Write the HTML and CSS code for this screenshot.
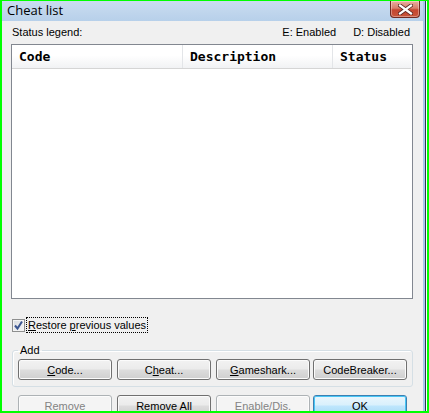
FILE: index.html
```html
<!DOCTYPE html>
<html>
<head>
    <title>Cheat list</title>
    <link rel="stylesheet" href="styles.css">
</head>
<body>
    <div class="screen">
        <div class="window">
            <div class="titlebar">
                <span class="title">Cheat list</span>
                <div class="close-btn">
                    <svg width="15" height="11" viewBox="0 0 15 11">
                        <path d="M2 1.5 L13 9.5 M13 1.5 L2 9.5" stroke="#5a2620" stroke-width="4" stroke-linecap="square"/>
                        <path d="M2 1.5 L13 9.5 M13 1.5 L2 9.5" stroke="#ffffff" stroke-width="2.2" stroke-linecap="square"/>
                    </svg>
                </div>
            </div>

            <div class="client">
                <div class="legend-row">
                    <span class="legend-label">Status legend:</span>
                    <span class="legend-item">E: Enabled</span>
                    <span class="legend-item last">D: Disabled</span>
                </div>

                <div class="listbox">
                    <div class="list-header">
                        <div class="col col-code">Code</div>
                        <div class="col col-desc">Description</div>
                        <div class="col col-status">Status</div>
                    </div>
                </div>

                <div class="check-row">
                    <span class="checkbox">
                        <svg width="11" height="11" viewBox="0 0 11 11">
                            <path d="M2 5.5 L4.5 8.5 L9 1.5" fill="none" stroke="#3c5691" stroke-width="2"/>
                        </svg>
                    </span>
                    <span class="check-label"><u>R</u>estore <u>p</u>revious values</span>
                </div>

                <fieldset class="add-group">
                    <legend>Add</legend>
                    <div class="btn-row">
                        <button class="btn"><u>C</u>ode...</button>
                        <button class="btn">C<u>h</u>eat...</button>
                        <button class="btn"><u>G</u>ameshark...</button>
                        <button class="btn narrow-gap">CodeBreaker...</button>
                    </div>
                </fieldset>

                <div class="btn-row bottom-row">
                    <button class="btn disabled"><u>R</u>emove</button>
                    <button class="btn">Remove <u>A</u>ll</button>
                    <button class="btn disabled"><u>E</u>nable/Dis.</button>
                    <button class="btn default narrow-gap"><u>O</u>K</button>
                </div>
            </div>
        </div>
    </div>
</body>
</html>
```

FILE: styles.css
```css
body {
    margin: 0;
    width: 429px;
    height: 413px;
    overflow: hidden;
    background-color: #ffffff;
    font-family: "Liberation Sans", Arial, sans-serif;
    font-size: 11px;
    color: #000000;
}

.screen {
    box-sizing: border-box;
    width: 429px;
    height: 413px;
    border: 2px solid #00ff00;
    border-top-width: 1px;
    overflow: hidden;
}

.window {
    height: 100%;
    padding-right: 4px;
    background-color: #f0f0f0;
    box-shadow: inset -1px 0 #ffffff, inset -2px 0 #2a3b50, inset -4px 0 #a9c9ea;
    display: flex;
    flex-direction: column;
    overflow: hidden;
}

.titlebar {
    height: 20px;
    flex: none;
    display: flex;
    align-items: flex-start;
    background: linear-gradient(#cadcf0, #b7d0ea);
}

.title {
    font-family: "Open Sans", "Noto Sans", sans-serif;
    font-size: 13px;
    line-height: 18px;
    padding-left: 5px;
    flex: 1;
}

.close-btn {
    box-sizing: border-box;
    width: 30px;
    height: 17px;
    margin-right: 3px;
    border: 1px solid #6f2a22;
    border-top: none;
    border-radius: 0 0 4px 4px;
    background: linear-gradient(#e7ae9f 0%, #d7806d 45%, #c44631 55%, #c9553a 100%);
    box-shadow: inset 0 0 0 1px rgba(255, 255, 255, 0.35);
    display: flex;
    align-items: center;
    justify-content: center;
}

.client {
    flex: 1;
    padding: 0 10px 0 9px;
}

.legend-row {
    display: flex;
    padding: 5px 0 0 1px;
    margin-bottom: 5px;
    line-height: 13px;
}

.legend-label {
    flex: 1;
}

.legend-item {
    margin-left: 17px;
}

.legend-item.last {
    margin-right: 3px;
}

.listbox {
    box-sizing: border-box;
    height: 255px;
    border: 1px solid #828790;
    background-color: #ffffff;
}

.list-header {
    display: flex;
    height: 23px;
    margin-right: 1px;
    border-bottom: 1px solid #d5d5d5;
    background: linear-gradient(#ffffff, #ffffff 45%, #f1f2f4);
}

.col {
    box-sizing: border-box;
    padding-left: 7px;
    font-family: "DejaVu Sans Mono", "Liberation Mono", monospace;
    font-weight: bold;
    font-size: 13px;
    line-height: 23px;
    border-right: 1px solid #e3e5e8;
}

.col-code {
    width: 171px;
}

.col-desc {
    width: 150px;
}

.col-status {
    flex: 1;
    border-right: none;
}

.check-row {
    display: flex;
    align-items: center;
    margin-top: 18px;
    padding-left: 1px;
    height: 16px;
}

.checkbox {
    box-sizing: border-box;
    width: 13px;
    height: 13px;
    border: 1px solid #8e8f8f;
    background: linear-gradient(135deg, #d8dbe0, #f6f6f6);
    box-shadow: inset 0 0 0 1px #f4f4f4;
    display: flex;
    align-items: center;
    justify-content: center;
}

.check-label {
    margin-left: 1px;
    padding: 0 1px;
    line-height: 14px;
    border: 1px dotted #000000;
}

.add-group {
    margin: 11px 0 0 1px;
    width: 401px;
    box-sizing: border-box;
    padding: 2px 5px 6px 5px;
    border: 1px solid #d5dfe5;
    border-radius: 3px;
    box-shadow: inset 1px 1px #ffffff;
}

.add-group legend {
    padding: 0 2px;
    line-height: 13px;
}

.btn-row {
    display: flex;
    gap: 5px;
}

.bottom-row {
    margin-top: 8px;
    padding-left: 7px;
}

.btn {
    box-sizing: border-box;
    width: 94px;
    height: 21px;
    padding: 0;
    flex: none;
    font-family: "Liberation Sans", Arial, sans-serif;
    font-size: 11px;
    color: #000000;
    border: 1px solid #707070;
    border-radius: 3px;
    background: linear-gradient(#f2f2f2 0%, #ebebeb 48%, #dddddd 52%, #cfcfcf 100%);
    box-shadow: inset 0 0 0 1px #fbfbfb;
}

.btn.narrow-gap {
    margin-left: -2px;
}

.btn.disabled {
    color: #838383;
    border-color: #adb2b5;
    background: #f4f4f4;
    box-shadow: inset 0 0 0 1px #fcfcfc;
}

.btn.default {
    border-color: #3c7fb1;
    background: linear-gradient(#eaf6fd 0%, #d9f0fc 48%, #bee6fd 52%, #a7d9f5 100%);
    box-shadow: inset 0 0 0 1px #48c6f6;
}
```
